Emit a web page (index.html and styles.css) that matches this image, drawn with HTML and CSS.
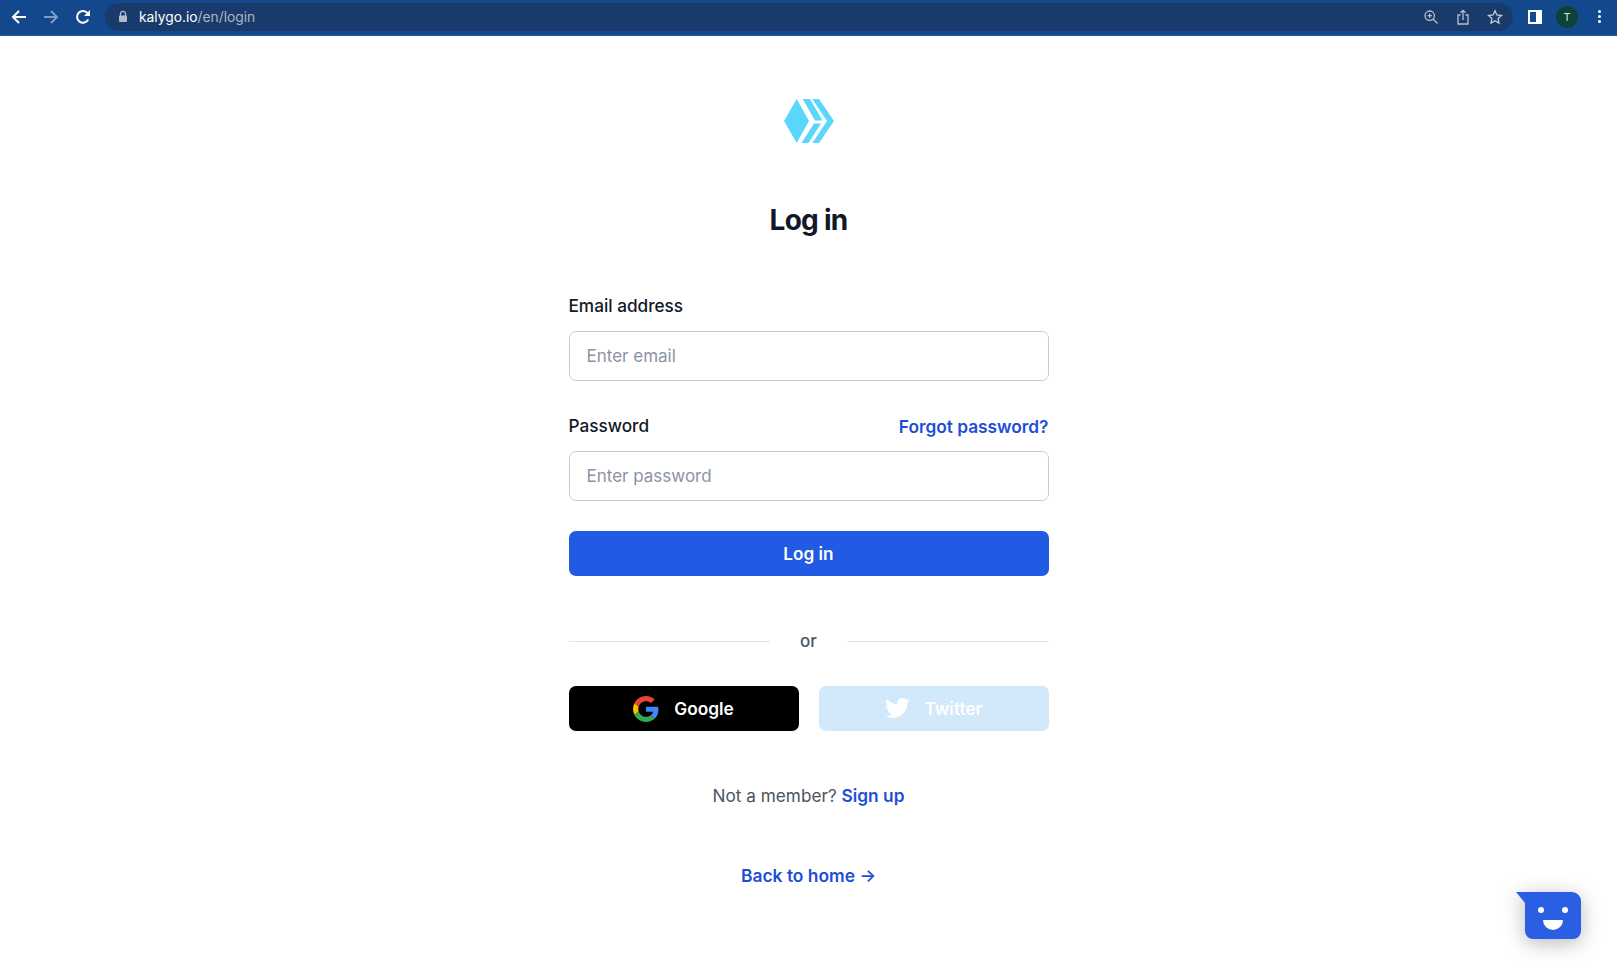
FILE: index.html
```html
<!DOCTYPE html>
<html lang="en">
<head>
<meta charset="utf-8">
<title>Log in</title>
<link rel="stylesheet" href="styles.css">
</head>
<body>
<header class="chrome">
  <svg class="nav-icon" width="18" height="18" viewBox="0 0 18 18"><path d="M16 9H3M9 3 3 9l6 6" fill="none" stroke="#fff" stroke-width="2"/></svg>
  <svg class="nav-icon" width="18" height="18" viewBox="0 0 18 18"><path d="M2 9h13M9 3l6 6-6 6" fill="none" stroke="#7f9cc4" stroke-width="2"/></svg>
  <svg class="nav-icon" width="18" height="18" viewBox="0 0 18 18"><path d="M14.2 11.5A5.9 5.9 0 1 1 13.6 5.2L15 7" fill="none" stroke="#fff" stroke-width="2"/><path d="M16 2v6h-6z" fill="#fff"/></svg>
  <div class="omnibox">
    <svg width="10" height="13" viewBox="0 0 10 13"><path d="M2.5 6V3.8a2.5 2.5 0 0 1 5 0V6" fill="none" stroke="#b4bcc8" stroke-width="1.3"/><rect x="1" y="5.5" width="8" height="6.5" rx="1" fill="#b4bcc8"/></svg>
    <div class="url"><span class="host">kalygo.io</span>/en/login</div>
    <div class="omni-actions">
      <svg width="16" height="16" viewBox="0 0 16 16"><circle cx="6.7" cy="6.7" r="4.7" fill="none" stroke="#b4bfce" stroke-width="1.3"/><path d="M10.2 10.2 14.5 14.5M4.5 6.7h4.4M6.7 4.5v4.4" stroke="#b4bfce" stroke-width="1.3"/></svg>
      <svg width="16" height="16" viewBox="0 0 16 16"><path d="M5.5 6H3v9h10V6h-2.500M8 11V1.500M5.500 3.800 8 1.300l2.500 2.500" fill="none" stroke="#b4bfce" stroke-width="1.300"/></svg>
      <svg width="16" height="16" viewBox="0 0 16 16"><path d="m8 1.800 1.900 4.200 4.600.5-3.400 3.100.9 4.500-4-2.300-4 2.300.9-4.500-3.400-3.100 4.600-.5z" fill="none" stroke="#c3ccd8" stroke-width="1.300"/></svg>
    </div>
  </div>
  <svg class="panel" width="14" height="14" viewBox="0 0 14 14"><path d="M0 0h14v14H0zM2 2v10h6V2z" fill="#fff" fill-rule="evenodd"/></svg>
  <div class="avatar">T</div>
  <div class="menu"><i></i><i></i><i></i></div>
</header>

<main class="login">
  <svg class="logo" width="50" height="44" viewBox="0 0 50 44">
    <path d="M12.700 0 0 22l12.700 22L25 22z" fill="#5bd7fb"/>
    <path d="M18.700 0H26l12.500 21.500H31zM30 24.500h7L24.500 44H17.500zM28.300 0H35l15 22-15 22h-6.700L43 22z" fill="#5bd7fb"/>
  </svg>
  <h1 class="title">Log in</h1>
  <form class="form">
    <label class="label" for="email">Email address</label>
    <input class="input" id="email" type="email" placeholder="Enter email">
    <div class="label-row">
      <label class="label" for="password">Password</label>
      <a class="link" href="#">Forgot password?</a>
    </div>
    <input class="input" id="password" type="password" placeholder="Enter password">
    <button class="submit" type="button">Log in</button>
    <div class="divider"><span class="rule"></span><span class="or">or</span><span class="rule"></span></div>
    <div class="socials">
      <button class="social google" type="button">
        <svg width="26" height="26" viewBox="0 0 48 48">
          <path fill="#EA4335" d="M24 9.500c3.500 0 6.700 1.200 9.200 3.600l6.900-6.900C35.900 2.400 30.500 0 24 0 14.600 0 6.500 5.400 2.600 13.200l8 6.200C12.400 13.700 17.700 9.500 24 9.500z"/>
          <path fill="#4285F4" d="M47 24.500c0-1.600-.1-3.100-.4-4.500H24v9h12.900c-.6 3-2.200 5.500-4.700 7.200l7.700 6C44.400 38 47 31.800 47 24.500z"/>
          <path fill="#FBBC05" d="M10.500 28.600c-.5-1.400-.8-3-.8-4.600s.3-3.200.8-4.600l-8-6.200C.9 16.500 0 20.100 0 24s.9 7.500 2.600 10.800z"/>
          <path fill="#34A853" d="M24 48c6.500 0 11.900-2.100 15.900-5.800l-7.700-6c-2.200 1.500-4.900 2.300-8.200 2.300-6.300 0-11.600-4.200-13.500-9.900l-8 6.200C6.500 42.600 14.600 48 24 48z"/>
        </svg>
        Google
      </button>
      <button class="social twitter" type="button">
        <svg width="25" height="21" viewBox="0 0 24 20"><path fill="#fff" d="M24 2.400c-.9.400-1.800.7-2.800.8 1-.6 1.800-1.600 2.200-2.700-1 .6-2 1-3.100 1.200C19.300.7 18 0 16.600 0c-2.700 0-4.900 2.200-4.900 4.900 0 .4 0 .8.100 1.100C7.700 5.800 4.100 3.900 1.700.9c-.4.700-.7 1.600-.7 2.500 0 1.700.9 3.200 2.200 4.100-.8 0-1.600-.2-2.200-.6v.1c0 2.400 1.700 4.400 3.900 4.800-.4.100-.8.200-1.300.2-.3 0-.6 0-.9-.1.600 2 2.400 3.400 4.600 3.400-1.700 1.300-3.800 2.100-6.100 2.100-.4 0-.8 0-1.200-.1C2.200 18.200 4.800 19 7.500 19c9.100 0 14-7.500 14-14v-.6c1-.7 1.800-1.500 2.500-2z"/></svg>
        Twitter
      </button>
    </div>
  </form>
  <p class="member">Not a member? <a class="link" href="#">Sign up</a></p>
  <a class="link home" href="#">Back to home →</a>
</main>

<div class="chat">
  <svg width="66" height="48" viewBox="0 0 66 48">
    <path d="M0 0h56a9 9 0 0 1 9 9v30a8 8 0 0 1-8 8H17a8 8 0 0 1-8-8V11z" fill="#2b5fe3"/>
    <circle cx="25" cy="18" r="3" fill="#fff"/><circle cx="49" cy="18" r="3" fill="#fff"/>
    <path d="M27 28h20a10 10 0 0 1-20 0z" fill="#fff"/>
  </svg>
</div>
</body>
</html>
```
FILE: styles.css
```css
* { box-sizing: border-box; }
html, body { margin: 0; height: 100%; }
body {
  background: #fff;
  color: #111827;
  font-family: Inter, "Liberation Sans", sans-serif;
  overflow: hidden;
}
.chrome {
  display: flex;
  align-items: center;
  height: 36px;
  padding: 0 10px 2px;
  background: #14488c;
  border-bottom: 1px solid #2a5c9c;
}
.nav-icon { margin-right: 14px; flex: none; }
.omnibox {
  display: flex;
  align-items: center;
  flex: 1;
  height: 28px;
  margin-left: -1px;
  padding-left: 13px;
  background: #193b6b;
  border-radius: 14px;
}
.url {
  margin-left: 11px;
  font-size: 13.800px;
  color: #a9b6c9;
}
.host { color: #fff; }
.omni-actions {
  display: flex;
  gap: 16px;
  margin-left: auto;
  padding-right: 10px;
}
.panel { margin-left: 15px; flex: none; }
.avatar {
  display: flex;
  align-items: center;
  justify-content: center;
  flex: none;
  width: 22px;
  height: 22px;
  margin-left: 14px;
  border-radius: 50%;
  background: #0d4236;
  color: #cfe3dc;
  font-size: 11px;
}
.menu {
  display: flex;
  flex-direction: column;
  gap: 2px;
  flex: none;
  margin-left: 20px;
  margin-right: 6px;
}
.menu i { width: 3px; height: 3px; background: #fff; border-radius: 50%; }
.login {
  display: flex;
  flex-direction: column;
  align-items: center;
  padding-top: 63px;
}
.logo { display: block; }
.title {
  margin: 59px 0 0;
  font-size: 28px;
  line-height: 36px;
  font-weight: 700;
  letter-spacing: -0.750px;
}
.form { width: 480px; margin-top: 56px; }
.label {
  display: block;
  font-size: 17.200px;
  font-weight: 500;
  line-height: 24px;
}
.label-row {
  display: flex;
  justify-content: space-between;
  align-items: center;
  margin-top: 33px;
}
.input {
  display: block;
  width: 100%;
  height: 50px;
  margin-top: 13px;
  padding: 0 17px;
  border: 1px solid #c9cbd3;
  border-radius: 7px;
  font: 400 17px Inter, "Liberation Sans", sans-serif;
  color: #111827;
  background: #fff;
}
.input::placeholder { color: #8b93a3; opacity: 1; }
.link {
  color: #1d4ed8;
  font-size: 17.300px;
  font-weight: 600;
  text-decoration: none;
}
.submit {
  display: block;
  width: 100%;
  height: 45px;
  margin-top: 30px;
  border: 0;
  border-radius: 7px;
  background: #215ae3;
  color: #fff;
  font: 600 17.200px Inter, "Liberation Sans", sans-serif;
}
.divider {
  display: flex;
  align-items: center;
  gap: 30px;
  margin-top: 53px;
  height: 24px;
}
.rule { flex: 1; height: 1px; background: #e1e3e8; }
.or { color: #4b5563; font-size: 17px; font-weight: 500; }
.socials { display: flex; gap: 20px; margin-top: 33px; }
.social {
  display: flex;
  align-items: center;
  justify-content: center;
  gap: 15px;
  flex: 1;
  height: 45px;
  border: 0;
  border-radius: 7px;
  color: #fff;
  font: 600 17.300px Inter, "Liberation Sans", sans-serif;
}
.google { background: #000; }
.twitter { background: #d2e8fb; }
.member {
  margin: 53px 0 0;
  color: #4b5563;
  font-size: 17.200px;
  line-height: 24px;
}
.home { margin-top: 56px; font-size: 17.400px; line-height: 24px; }
.chat {
  position: fixed;
  left: 1516px;
  top: 892px;
  width: 66px;
  height: 48px;
  filter: drop-shadow(0 4px 10px rgba(0,0,0,.28));
}
.chat svg { display: block; }
```
